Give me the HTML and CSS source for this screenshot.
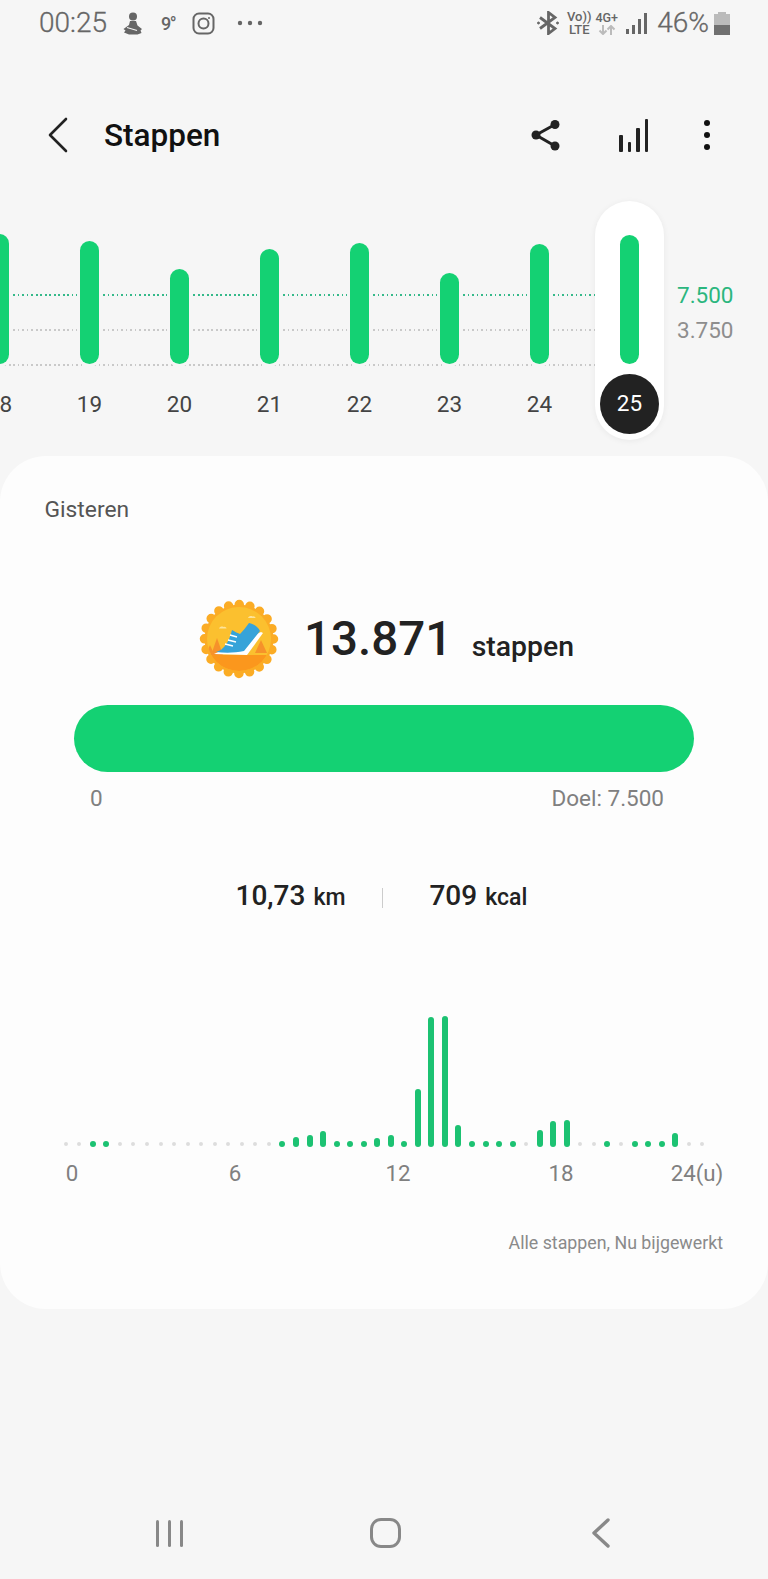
FILE: index.html
```html
<!DOCTYPE html>
<html lang="nl">
<head>
    <meta charset="UTF-8">
    <meta name="viewport" content="width=device-width, initial-scale=1.0">
    <title>Stappen</title>
    <link rel="stylesheet" href="styles.css">
</head>
<body>
    <!-- Statusbalk -->
    <div class="status-bar">
        <div class="status-left">
            <span class="clock">00:25</span>
            <svg class="ic-figure" width="20" height="23" viewBox="0 0 20 23">
                <circle cx="10" cy="4.500" r="4" fill="#666"/>
                <path d="M7 9h6l1.500 4.500 4.500 3.500-1.500 1.500 1 2.500-4 1.500H6l-5-2 1.500-2L0.500 17l5.500-4z" fill="#666"/>
                <path d="M4 15.500l10 3" stroke="#f6f6f6" stroke-width="1.300"/>
            </svg>
            <span class="temp">9°</span>
            <svg class="ic-insta" width="23" height="23" viewBox="0 0 23 23" fill="none" stroke="#666" stroke-width="2">
                <rect x="1.500" y="1.500" width="20" height="20" rx="5.500"/>
                <circle cx="11.500" cy="11.500" r="5"/>
                <circle cx="17" cy="6" r="1" fill="#666" stroke="none"/>
            </svg>
            <svg class="ic-more" width="26" height="6" viewBox="0 0 26 6" fill="#666">
                <circle cx="3" cy="3" r="2.200"/>
                <circle cx="13" cy="3" r="2.200"/>
                <circle cx="23" cy="3" r="2.200"/>
            </svg>
        </div>
        <div class="status-right">
            <svg class="ic-bt" width="22" height="24" viewBox="0 0 22 24" fill="none" stroke="#666" stroke-width="2.800">
                <path d="M3 6.500l15 11-6.500 5V1.500l6.500 5-15 11"/>
                <circle cx="1.500" cy="12" r="1" fill="#666" stroke-width="1"/>
                <circle cx="20.500" cy="12" r="1" fill="#666" stroke-width="1"/>
            </svg>
            <div class="net-text net-volte"><span>Vo))</span><span>LTE</span></div>
            <div class="net-text net-4g">
                <span>4G+</span>
                <svg width="18" height="10" viewBox="0 0 18 10" fill="none" stroke="#bbb" stroke-width="2">
                    <path d="M5 0v9M1.500 5.500L5 9l3.500-3.500"/>
                    <path d="M13 10V1M9.500 4.500L13 1l3.500 3.500"/>
                </svg>
            </div>
            <div class="signal">
                <i class="s1"></i><i class="s2"></i><i class="s3"></i><i class="s4"></i>
            </div>
            <span class="battery-text">46%</span>
            <div class="battery"><div class="battery-cap"></div><div class="battery-body"><div class="battery-level"></div></div></div>
        </div>
    </div>

    <!-- Titelbalk -->
    <header class="app-bar">
        <svg class="ic-back" width="20" height="36" viewBox="0 0 20 36" fill="none" stroke="#222" stroke-width="2.600" stroke-linecap="round" stroke-linejoin="round">
            <path d="M18 2L2 18l16 16"/>
        </svg>
        <h1 class="title">Stappen</h1>
        <svg class="ic-share" width="32" height="34" viewBox="0 0 32 34" fill="#222" stroke="#222">
            <path d="M26 6.500L7 17l19 11" fill="none" stroke-width="3"/>
            <circle cx="26" cy="6.500" r="4.500" stroke="none"/>
            <circle cx="7" cy="17" r="4.500" stroke="none"/>
            <circle cx="26" cy="28" r="4.500" stroke="none"/>
        </svg>
        <div class="ic-bars">
            <i class="b1"></i><i class="b2"></i><i class="b3"></i><i class="b4"></i>
        </div>
        <div class="ic-menu"><i></i><i></i><i></i></div>
    </header>

    <!-- Weekgrafiek -->
    <section class="week-chart">
        <div class="goal-line line-goal"></div>
        <div class="goal-line line-half"></div>
        <div class="goal-line line-zero"></div>
        <div class="days">
            <div class="day"><div class="bar-slot"><div class="bar" style="height:130px"></div></div><span class="day-num">18</span></div>
            <div class="day"><div class="bar-slot"><div class="bar" style="height:123px"></div></div><span class="day-num">19</span></div>
            <div class="day"><div class="bar-slot"><div class="bar" style="height:95px"></div></div><span class="day-num">20</span></div>
            <div class="day"><div class="bar-slot"><div class="bar" style="height:115px"></div></div><span class="day-num">21</span></div>
            <div class="day"><div class="bar-slot"><div class="bar" style="height:121px"></div></div><span class="day-num">22</span></div>
            <div class="day"><div class="bar-slot"><div class="bar" style="height:91px"></div></div><span class="day-num">23</span></div>
            <div class="day"><div class="bar-slot"><div class="bar" style="height:120px"></div></div><span class="day-num">24</span></div>
            <div class="day selected"><div class="bar-slot"><div class="bar" style="height:129px"></div></div><span class="day-num">25</span></div>
            <div class="axis">
                <span class="axis-goal">7.500</span>
                <span class="axis-half">3.750</span>
            </div>
        </div>
    </section>

    <!-- Kaart -->
    <main class="card">
        <div class="card-date">Gisteren</div>

        <div class="summary">
            <svg class="badge" width="80" height="80" viewBox="0 0 80 80">
                <defs>
                    <clipPath id="badgeClip"><circle cx="40" cy="40" r="32"/></clipPath>
                </defs>
                <circle cx="40" cy="40" r="34.500" fill="#fbac25" stroke="#fbac25" stroke-width="9.500" stroke-linecap="round" stroke-dasharray="0 10.838"/>
                <circle cx="40" cy="40" r="32" fill="#fbc02f"/>
                <g clip-path="url(#badgeClip)">
                    <rect x="0" y="56" width="80" height="24" fill="#fb971d"/>
                    <path d="M18 39l6 17H12z" fill="#f6922a"/>
                    <path d="M11 46l4.500 10h-9z" fill="#f6922a"/>
                    <path d="M62 41l6 13H56z" fill="#f6922a"/>
                    <path d="M20 29.500c1-2 3-2.500 4.500-1.500 1.500-.5 3 .5 3 1.500z" fill="#fde39a"/>
                    <path d="M49 19c1-2 3-2.500 4.500-1.500 1.500-.5 3 .5 3 1.500z" fill="#fde39a"/>
                    <path d="M15 55l33 1 16-22-2-1z" fill="#fff"/>
                    <path d="M17 53c8-2 13-10 16-22 3 2 6 3 8 4 3-3 6-7 9-11 5 1 9 4 11 8L45 52c-9 2-19 2-28 1z" fill="#36a3d9"/>
                    <path d="M31 36l7 2M29 41l8 2M26 45l8 2" stroke="#fff" stroke-width="1.500"/>
                </g>
            </svg>
            <span class="step-count">13.871</span>
            <span class="step-unit">stappen</span>
        </div>

        <div class="progress"></div>
        <div class="progress-scale">
            <span>0</span>
            <span>Doel: 7.500</span>
        </div>

        <div class="stats">
            <div class="stat stat-km"><b>10,73</b> <span>km</span></div>
            <div class="stat-sep"></div>
            <div class="stat"><b>709</b> <span>kcal</span></div>
        </div>

        <div class="hours-chart">
            <i class="off"></i><i class="off"></i><i></i><i></i>
            <i class="off"></i><i class="off"></i><i class="off"></i><i class="off"></i><i class="off"></i><i class="off"></i>
            <i class="off"></i><i class="off"></i><i class="off"></i><i class="off"></i><i class="off"></i><i class="off"></i>
            <i></i><i style="height:10px"></i><i style="height:12px"></i><i style="height:16px"></i>
            <i></i><i></i><i></i><i style="height:9px"></i>
            <i style="height:12px"></i><i></i><i style="height:58px"></i><i style="height:130px"></i>
            <i style="height:131px"></i><i style="height:22px"></i><i></i><i></i>
            <i></i><i></i><i class="off"></i><i style="height:17px"></i>
            <i style="height:26px"></i><i style="height:27px"></i><i class="off"></i><i class="off"></i>
            <i></i><i class="off"></i><i></i><i></i>
            <i></i><i style="height:14px"></i><i class="off"></i><i class="off"></i>
        </div>
        <div class="hours-axis">
            <span>0</span><span>6</span><span>12</span><span>18</span><span>24(u)</span>
        </div>

        <div class="card-note">Alle stappen, Nu bijgewerkt</div>
    </main>

    <!-- Navigatie -->
    <nav class="nav-bar">
        <div class="nav-recent"><i></i><i></i><i></i></div>
        <div class="nav-home"></div>
        <svg class="nav-back" width="20" height="30" viewBox="0 0 20 30" fill="none" stroke="#888" stroke-width="3.400" stroke-linecap="round" stroke-linejoin="round">
            <path d="M17 2L3 15l14 13"/>
        </svg>
    </nav>
</body>
</html>
```

FILE: styles.css
```css
:root {
    --bg-color: #f6f6f6;
    --card-color: #fdfdfd;
    --green: #14d173;
    --green-dark: #1cc272;
    --text-dark: #222222;
    --text-mid: #555555;
    --text-gray: #808080;
    --icon-gray: #666666;
}

* {
    box-sizing: border-box;
    margin: 0;
    padding: 0;
}

body {
    width: 768px;
    height: 1579px;
    overflow: hidden;
    background: var(--bg-color);
    color: var(--text-dark);
    font-family: 'Roboto', 'Liberation Sans', sans-serif;
}

/* Statusbalk */
.status-bar {
    height: 46px;
    padding: 10px 38px 0 39px;
    display: flex;
    justify-content: space-between;
    color: var(--icon-gray);
}

.status-left,
.status-right {
    display: flex;
    align-items: center;
    height: 26px;
}

.clock {
    font-size: 28px;
    line-height: 26px;
    font-weight: 300;
    -webkit-text-stroke: 0.3px var(--icon-gray);
}

.ic-figure {
    margin-left: 16px;
}

.temp {
    margin-left: 18px;
    width: 14px;
    font-size: 18px;
    font-weight: 500;
    letter-spacing: -1.5px;
}

.ic-insta {
    margin-left: 17px;
}

.ic-more {
    margin-left: 22px;
}

.ic-bt {
    margin-right: 8px;
}

.net-text {
    display: flex;
    flex-direction: column;
    align-items: center;
    font-weight: 500;
}

.net-volte {
    width: 24px;
    font-size: 13px;
    line-height: 13px;
    margin-right: 4px;
}

.net-4g {
    width: 23px;
    font-size: 12.5px;
    line-height: 12px;
    margin-right: 8px;
}

.net-4g svg {
    margin-top: 1px;
}

.signal {
    display: flex;
    align-items: flex-end;
    gap: 3px;
    height: 21px;
    margin-right: 10px;
}

.signal i {
    width: 3px;
    background: var(--icon-gray);
}

.s1 { height: 5px; }
.s2 { height: 9px; }
.s3 { height: 15px; }
.s4 { height: 21px; }

.battery-text {
    font-size: 28px;
    font-weight: 300;
    line-height: 26px;
    -webkit-text-stroke: 0.3px var(--icon-gray);
    margin-right: 5px;
}

.battery {
    width: 16px;
    display: flex;
    flex-direction: column;
    align-items: center;
}

.battery-cap {
    width: 8px;
    height: 2px;
    background: #bbbbbb;
}

.battery-body {
    width: 16px;
    height: 21px;
    background: #bbbbbb;
    display: flex;
    align-items: flex-end;
}

.battery-level {
    width: 100%;
    height: 10px;
    background: #707070;
}

/* Titelbalk */
.app-bar {
    height: 68px;
    margin-top: 55px;
    display: flex;
    align-items: center;
    position: relative;
}

.ic-back {
    margin-left: 48px;
}

.title {
    margin-left: 36px;
    font-size: 31.5px;
    font-weight: 500;
    color: #111111;
    flex: 1;
}

.ic-share {
    margin-right: 58.5px;
}

.ic-bars {
    display: flex;
    align-items: flex-end;
    gap: 5px;
    height: 33px;
    margin-right: 56px;
}

.ic-bars i {
    width: 3.5px;
    background: var(--text-dark);
    border-radius: 1px;
}

.b1 { height: 17px; }
.b2 { height: 10px; }
.b3 { height: 24px; }
.b4 { height: 33px; }

.ic-menu {
    display: flex;
    flex-direction: column;
    gap: 6px;
    margin-right: 58px;
}

.ic-menu i {
    width: 6px;
    height: 6px;
    border-radius: 50%;
    background: #111111;
}

/* Weekgrafiek */
.week-chart {
    position: relative;
    height: 239px;
    margin-top: 32px;
}

.goal-line {
    position: absolute;
    left: 0;
    width: 600px;
    height: 1.5px;
    background: repeating-linear-gradient(90deg, #c9c9c9 0 1.5px, transparent 1.5px 4.5px);
}

.line-goal {
    top: 93px;
    background: repeating-linear-gradient(90deg, #35b98a 0 1.5px, transparent 1.5px 4.5px);
}

.line-half { top: 128px; }
.line-zero { top: 163px; }

.days {
    display: flex;
    margin-left: -45.5px;
}

.day {
    position: relative;
    width: 90px;
    height: 239px;
    display: flex;
    flex-direction: column;
    align-items: center;
}

.bar-slot {
    height: 163px;
    display: flex;
    align-items: flex-end;
}

.bar {
    width: 19px;
    border-radius: 10px;
    background: var(--green);
    box-shadow: 0 0 0 3px var(--bg-color);
}

.day-num {
    margin-top: 10px;
    width: 59px;
    height: 60px;
    font-size: 22.5px;
    line-height: 60px;
    text-align: center;
    color: #444444;
}

.selected {
    width: 69px;
    margin: 0 10.5px;
    background: #ffffff;
    border-radius: 35px;
    box-shadow: 0 1px 6px rgba(0, 0, 0, 0.06);
}

.selected .bar {
    box-shadow: none;
}

.selected .day-num {
    border-radius: 50%;
    background: var(--text-dark);
    color: #ffffff;
    line-height: 58px;
}

.axis {
    display: flex;
    flex-direction: column;
    padding-top: 77px;
    margin-left: 2.5px;
    font-size: 22.5px;
    line-height: 35px;
}

.axis-goal { color: #2bb67e; }
.axis-half { color: #8e8e8e; }

/* Kaart */
.card {
    margin-top: 16px;
    height: 853px;
    padding-top: 41px;
    background: var(--card-color);
    border-radius: 46px;
}

.card-date {
    margin-left: 44.5px;
    font-size: 22.8px;
    line-height: 26px;
    color: var(--text-mid);
}

.summary {
    margin-top: 76px;
    padding-left: 199px;
    height: 80px;
    display: flex;
    align-items: center;
}

.step-count {
    margin-left: 25px;
    font-size: 47.5px;
    font-weight: 500;
    line-height: 60px;
}

.step-unit {
    margin-left: 19.5px;
    margin-top: 14px;
    font-size: 28.4px;
    font-weight: 500;
}

.progress {
    margin: 26px 74px 0 74px;
    height: 67px;
    border-radius: 34px;
    background: var(--green);
}

.progress-scale {
    margin-top: 13px;
    padding: 0 104px 0 90px;
    display: flex;
    justify-content: space-between;
    font-size: 22.5px;
    line-height: 26px;
    color: var(--text-gray);
}

.stats {
    margin-top: 66px;
    padding-left: 235.5px;
    height: 36px;
    display: flex;
    align-items: center;
}

.stat {
    display: flex;
    align-items: baseline;
    gap: 8px;
    font-weight: 500;
}

.stat b {
    font-size: 28px;
    font-weight: 500;
}

.stat span {
    font-size: 23px;
}

.stat-sep {
    width: 1px;
    height: 20px;
    margin: 6px 46px 0 37px;
    background: #cccccc;
}

.hours-chart {
    margin: 103px 0 0 59px;
    width: 650px;
    height: 131px;
    display: grid;
    grid-template-columns: repeat(48, 1fr);
    align-items: end;
    justify-items: center;
}

.hours-chart i {
    width: 6px;
    min-height: 6px;
    border-radius: 3px;
    background: var(--green-dark);
}

.hours-chart .off {
    width: 4px;
    min-height: 4px;
    margin-bottom: 1px;
    background: #dddddd;
}

.hours-axis {
    margin-top: 13px;
    display: grid;
    grid-template-columns: 144px 182px 144px 182px 90px;
    font-size: 22.3px;
    line-height: 26px;
    text-align: center;
    color: var(--text-gray);
}

.card-note {
    margin-top: 45px;
    padding-right: 45px;
    font-size: 17.8px;
    line-height: 24px;
    text-align: right;
    color: #8a8a8a;
}

/* Navigatie */
.nav-bar {
    margin-top: 209px;
    height: 30px;
    position: relative;
    display: flex;
    align-items: center;
}

.nav-recent {
    margin-left: 156px;
    display: flex;
    gap: 9px;
}

.nav-recent i {
    width: 3px;
    height: 27px;
    border-radius: 2px;
    background: #888888;
}

.nav-home {
    margin-left: 187px;
    width: 31px;
    height: 30px;
    border: 3.5px solid #888888;
    border-radius: 11px;
}

.nav-back {
    margin-left: 190px;
}
```
